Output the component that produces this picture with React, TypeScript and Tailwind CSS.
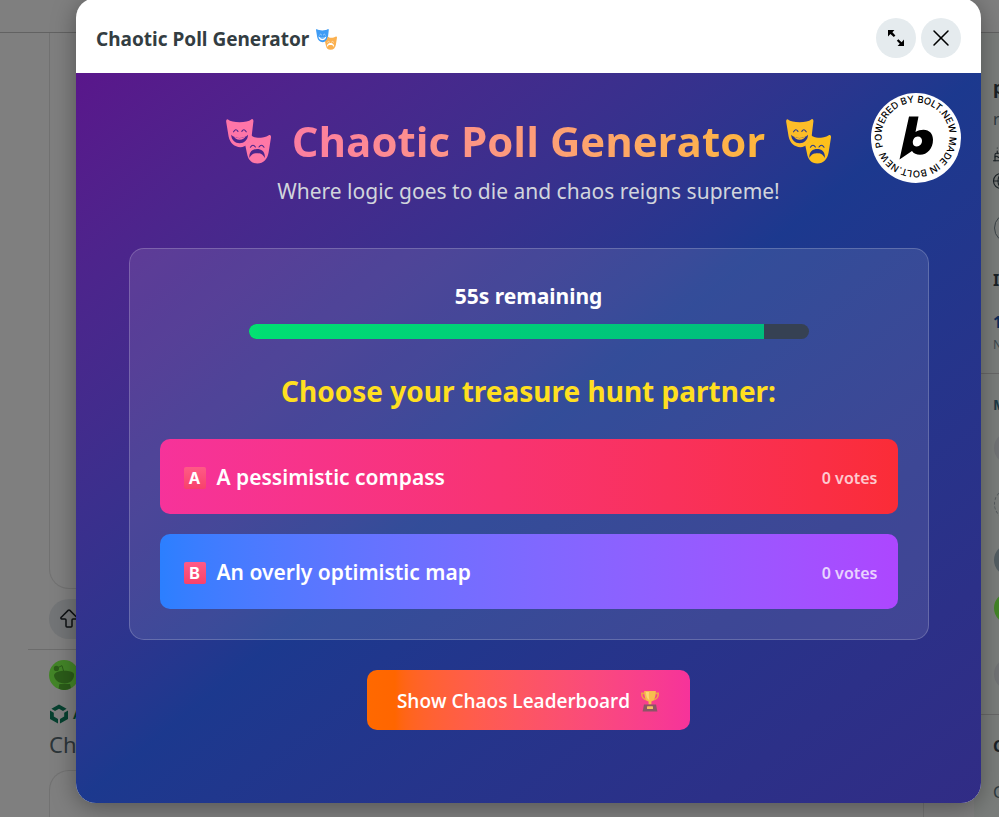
import { useId } from "react";
import { ArrowBigUp, Cake, Globe, X } from "lucide-react";

function Masks({ happy, sad, className }: { happy: string; sad: string; className: string }) {
  const id = useId();
  return (
    <svg viewBox="0 0 45 45" className={className} aria-hidden="true">
      <mask id={`${id}h`}>
        <rect width="45" height="45" fill="white" />
        <path d="M5.2 15.8 C9 20 18 20 22 15.8 C21.8 21.4 18 24.2 13.6 24.2 C9.2 24.2 5.4 21.4 5.2 15.8 Z" fill="black" />
        <path d="M8 17.3 C11 19.8 16.2 19.8 19.4 17.3 C18.8 19.6 16.6 20.8 13.7 20.8 C10.8 20.8 8.6 19.6 8 17.3 Z" fill="white" />
        <path d="M7.6 12.8 Q9.6 9 12 12.4 M15.8 12.4 Q18 9 20.2 12.8" fill="none" stroke="black" strokeWidth="1.1" strokeLinecap="round" />
      </mask>
      <mask id={`${id}s`}>
        <rect width="45" height="45" fill="white" />
        <path d="M23.4 39 C22.8 32.4 27.2 30 31.2 30 C35.2 30 39.4 32.4 38.8 39 C36.6 34.6 34 34.2 31.2 34.2 C28.4 34.2 25.6 34.6 23.4 39 Z" fill="black" />
        <path d="M24.4 28.2 Q27 24.4 29.4 28 M33 28 Q35.4 24.4 38 28.2" fill="none" stroke="black" strokeWidth="1.1" strokeLinecap="round" />
      </mask>
      <path
        mask={`url(#${id}h)`}
        fill={happy}
        d="M1.6 0.2 C4.4 2.4 8.6 3.2 13.6 3.2 C18.6 3.2 22.8 2.4 25.6 0.2 C26.8 -0.2 27.6 1 27.4 2.4 L25.8 16 C25 23.4 20 28.2 14.4 28.2 C8.6 28.2 3.8 24 2.6 17.6 L0.2 3 C0 1.4 0.4 0.2 1.6 0.2 Z"
      />
      <path
        mask={`url(#${id}s)`}
        fill={sad}
        d="M25 16 C26.8 17.8 29.4 18.8 32 18.8 C36 18.8 40 18 42.8 16.2 C44.2 15.6 45.2 16.8 45 18.4 L42.6 33.6 C41.6 40 37.4 44.6 31.4 44.6 C25.4 44.6 22 40.6 21 34.6 L19.2 26 C22.4 24.4 24.6 21 25 16 Z"
      />
    </svg>
  );
}

function Trophy() {
  return (
    <svg viewBox="0 0 20 22" className="h-[22px] w-5" aria-hidden="true">
      <path d="M4.6 3.4 H1.8 C1.6 7.4 3.4 9.4 7 10 M15.4 3.4 H18.2 C18.4 7.4 16.6 9.4 13 10" fill="none" stroke="#f0a04a" strokeWidth="1.6" />
      <path d="M4.2 1 H15.8 C15.8 7 14.6 10.2 11.4 11.6 V14.6 H8.6 V11.6 C5.4 10.2 4.2 7 4.2 1 Z" fill="#f7bd4e" />
      <path d="M6 2 H9 C8.6 6 9 8.4 9.6 10.4 C7 9 6 6 6 2 Z" fill="#fbd873" />
      <path d="M4 14.4 H16 L17.4 21.4 H2.6 Z" fill="#8b5566" />
      <rect x="7" y="16.2" width="6" height="2.8" rx="0.6" fill="#f3c060" />
    </svg>
  );
}

function BoltBadge() {
  return (
    <a href="#bolt" aria-label="Powered by Bolt.new" className="absolute right-5 top-5 size-[90px]">
      <svg viewBox="0 0 180 180" className="size-full">
        <circle cx="90" cy="90" r="90" fill="white" />
        <path id="badge-ring" d="M24.4 108 A68 68 0 1 1 24.8 109.2" fill="none" />
        <text className="font-['Inter',sans-serif] text-[19px] font-medium" fill="black">
          <textPath href="#badge-ring">POWERED BY BOLT.NEW MADE IN BOLT.NEW</textPath>
        </text>
        <path
          fillRule="evenodd"
          d="M76 47 H95 L89 78 C93.6 75 99 73.6 105 73.6 C117 73.6 124 82 124 93.6 C124 111 112.8 123.6 98 123.6 C91 123.6 85.2 121 82 116 L57 133 Z M93.6 87.2 C87.6 87.2 83.6 92.8 83.6 98.8 C83.6 103.6 86.8 106.8 91.6 106.8 C98 106.8 102 101.6 102 95.6 C102 90.4 98.8 87.2 93.6 87.2 Z"
          fill="black"
        />
      </svg>
    </a>
  );
}

function Snoo() {
  return (
    <svg viewBox="0 0 30 30" className="size-[30px]" aria-hidden="true">
      <circle cx="15" cy="15" r="15" fill="#438528" />
      <g fill="#2b5c19">
        <circle cx="7.4" cy="8.4" r="2.6" />
        <path d="M8 8 L13 5.6 L14.6 11" fill="none" stroke="#2b5c19" strokeWidth="1" />
        <path d="M5 15 C7 9.6 23 9.6 25 14 C25.4 20 21 23.4 15.6 23.4 C10 23.4 5.4 20.4 5 15 Z" />
        <path d="M10.4 24 H21 L22 28 C18 30.6 13 30.6 9.6 28.6 Z" />
      </g>
    </svg>
  );
}

function Feed() {
  return (
    <main className="min-w-0 flex-1 pl-7 pr-7">
      <div className="ml-[21px] mr-[22px] h-[556px] rounded-b-[20px] border border-t-0 border-[#727272]" />
      <div className="ml-[21px] mt-[10px] flex h-10 w-32 items-center rounded-full bg-[#737577] pl-2">
        <ArrowBigUp size={24} strokeWidth={1.5} color="#0e1113" />
      </div>
      <hr className="mt-[10px] border-[#6c6c6c]" />
      <div className="ml-[21px] mt-[10px]">
        <Snoo />
        <div className="mt-[14px] flex h-5 items-center gap-1 text-[13px] font-bold leading-5 text-[#06402f]">
          <svg viewBox="0 0 20 20" className="size-5" aria-hidden="true">
            <path d="M10 0.6 L17.6 4.8 L14 7 L10 4.8 L6 7 L2.4 4.8 Z M1 6.6 L4.8 8.8 V12.6 L9 15 V19.4 L1 15 Z M19 6.6 L15.2 8.8 V12.6 L11 15 V19.4 L19 15 Z" fill="#06402f" />
          </svg>
          A
        </div>
        <div className="mt-1 h-8 text-[22px] leading-8 text-[#2c3539]">Ch</div>
      </div>
      <div className="ml-[21px] mr-[22px] mt-[10px] h-20 rounded-t-[20px] border border-b-0 border-[#727272]" />
    </main>
  );
}

function Sidebar() {
  return (
    <aside className="flex w-[25px] flex-col bg-[#7a7d7b] pt-[38px] text-[#1a2226]">
      <div className="flex h-8 items-center overflow-hidden pl-[19px] text-lg font-bold">p</div>
      <div className="flex h-8 items-center overflow-hidden pl-[19px] text-base text-[#2e3a3f]">r</div>
      <div className="flex h-[38px] items-center overflow-hidden pl-[18px]"><Cake size={18} strokeWidth={1.5} className="shrink-0" /></div>
      <div className="flex h-4 items-center overflow-hidden pl-[18px]"><Globe size={18} strokeWidth={1.5} className="shrink-0" /></div>
      <div className="mt-6 overflow-hidden pl-5"><div className="h-[30px] w-24 rounded-full border border-[#3c4448]" /></div>
      <div className="mt-[22px] flex h-[30px] items-center overflow-hidden pl-[19px] text-base font-bold">I</div>
      <div className="mt-3 flex h-[30px] items-center overflow-hidden pl-[19px] text-base font-bold text-[#0c2c59]">1</div>
      <div className="flex h-4 items-center overflow-hidden pl-[19px] text-xs text-[#3c484d]">N</div>
      <hr className="mt-5 border-[#686868]" />
      <div className="mt-4 flex h-[30px] items-center overflow-hidden pl-[19px] text-sm font-bold text-[#1d3a45]">M</div>
      <div className="mt-3 overflow-hidden pl-5"><div className="size-8 rounded-full bg-[#717375]" /></div>
      <div className="mt-6 overflow-hidden pl-5"><div className="size-8 rounded-full border border-dashed border-[#555b5e]" /></div>
      <div className="mt-6 overflow-hidden pl-5"><div className="size-8 rounded-full bg-[#535e63]" /></div>
      <div className="mt-4 overflow-hidden pl-5"><div className="size-8 rounded-full bg-[#438528]" /></div>
      <div className="mt-[34px] overflow-hidden pl-5"><div className="size-8 rounded-full bg-[#717375]" /></div>
      <hr className="mt-6 border-[#686868]" />
      <div className="mt-4 flex h-[30px] items-center overflow-hidden pl-[19px] text-base font-bold">C</div>
      <div className="mt-4 flex h-[30px] items-center overflow-hidden pl-[19px] text-base text-[#2e3a3f]">C</div>
    </aside>
  );
}

function Option({ letter, label, tone }: { letter: string; label: string; tone: string }) {
  return (
    <button
      type="button"
      className={`flex h-[75px] w-full items-center justify-between rounded-[10px] bg-linear-to-r pl-6 pr-5 pt-0.5 font-semibold text-white ${tone}`}
    >
      <span className="flex items-center gap-[11px] text-[21px]">
        <span className="flex size-[22px] items-center justify-center rounded-[2px] bg-linear-to-b from-[#ff5a86] to-[#f8416b] font-['Inter',sans-serif] text-base font-bold leading-none">
          {letter}
        </span>
        {label}
      </span>
      <span className="text-base text-white/75">0 votes</span>
    </button>
  );
}

export default function App() {
  return (
    <div className="relative h-screen overflow-hidden bg-[#7f7f7f] font-['Noto_Sans','Open_Sans',sans-serif]">
      <header className="h-[33px] border-b border-[#626262]" />
      <div className="flex">
        <Feed />
        <Sidebar />
      </div>

      <div className="absolute inset-0 flex pb-[14px] pl-[76px] pr-[18px]">
        <section
          role="dialog"
          aria-labelledby="dialog-title"
          className="-mt-0.5 flex flex-1 flex-col overflow-hidden rounded-[20px] bg-white shadow-[0_4px_24px_rgba(0,0,0,0.35)]"
        >
          <div className="flex h-[75px] shrink-0 items-center justify-between px-5 pt-[5px]">
            <h2 id="dialog-title" className="flex items-center gap-[7px] pt-0.5 text-[19px] font-bold text-[#333d42]">
              Chaotic Poll Generator
              <Masks happy="#3f9cf5" sad="#fbb04e" className="size-[21px]" />
            </h2>
            <div className="flex gap-[5px]">
              <button type="button" aria-label="Expand" className="flex size-10 items-center justify-center rounded-full bg-[#e5ebee] text-black">
                <svg viewBox="0 0 16 16" className="size-4" aria-hidden="true">
                  <path d="M0 0 H6.4 L4.4 2.2 L7.4 5.4 L5.8 7 L2.4 4 L0 6.4 Z M16 16 H9.6 L11.8 13.8 L8.8 10.8 L10.4 9.2 L13.6 12.2 L16 9.6 Z" fill="currentColor" />
                </svg>
              </button>
              <button type="button" aria-label="Close" className="flex size-10 items-center justify-center rounded-full bg-[#e5ebee] text-black">
                <X size={28} strokeWidth={1.3} />
              </button>
            </div>
          </div>

          <div className="relative flex-1 bg-linear-to-br from-purple-900 via-blue-900 to-indigo-900 pt-10">
            <BoltBadge />
            <div className="mx-auto flex max-w-[800px] flex-col items-center">
              <h1 className="flex h-14 w-full items-center justify-center gap-[21px] bg-linear-to-r from-pink-400 to-yellow-400 bg-clip-text font-['Open_Sans',sans-serif] text-[42px] font-bold leading-[56px] text-transparent">
                <Masks happy="#fe75a8" sad="#fe77a6" className="size-[45px]" />
                Chaotic Poll Generator
                <Masks happy="#fdbd28" sad="#fdc01c" className="size-[45px]" />
              </h1>
              <p className="mb-10 mt-[5px] text-[21px] leading-[34px] text-gray-300">
                Where logic goes to die and chaos reigns supreme!
              </p>

              <div className="w-full rounded-[15px] border border-white/20 bg-white/10 p-[30px] text-center">
                <p className="mb-[10px] text-[21px] font-bold leading-[35px] text-white">55s remaining</p>
                <div className="mx-auto mb-[30px] h-[15px] max-w-[560px] overflow-hidden rounded-full bg-gray-700">
                  <div className="h-full w-[92%] bg-linear-to-r from-green-400 to-emerald-500" />
                </div>
                <h3 className="mb-[25px] text-[28px] font-bold leading-[45px] text-yellow-300">
                  Choose your treasure hunt partner:
                </h3>
                <div className="flex flex-col gap-5">
                  <Option letter="A" label="A pessimistic compass" tone="from-pink-500 to-red-500" />
                  <Option letter="B" label="An overly optimistic map" tone="from-blue-500 to-purple-500" />
                </div>
              </div>

              <button
                type="button"
                className="mt-[30px] flex h-[60px] items-center gap-[10px] rounded-[10px] bg-linear-to-r from-orange-500 to-pink-500 px-[30px] pt-0.5 font-['Open_Sans',sans-serif] text-[19px] font-semibold text-white"
              >
                Show Chaos Leaderboard
                <Trophy />
              </button>
            </div>
          </div>
        </section>
      </div>
    </div>
  );
}
